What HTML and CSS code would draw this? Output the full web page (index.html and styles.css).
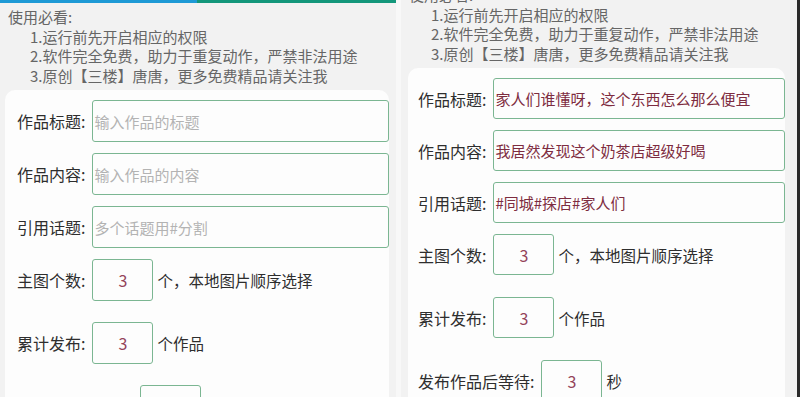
FILE: index.html
```html
<!DOCTYPE html>
<html lang="zh-CN">
<head>
    <meta charset="UTF-8">
    <meta name="viewport" content="width=device-width, initial-scale=1.0">
    <title>作品发布设置</title>
    <link rel="stylesheet" href="styles.css">
</head>
<body>
    <div class="screen">
        <div class="phone">
            <div class="progress">
                <span class="progress-blue"></span>
                <span class="progress-green"></span>
            </div>
            <div class="notice">
                <div class="notice-title">使用必看:</div>
                <div class="notice-item">1.运行前先开启相应的权限</div>
                <div class="notice-item">2.软件完全免费，助力于重复动作，严禁非法用途</div>
                <div class="notice-item">3.原创【三楼】唐唐，更多免费精品请关注我</div>
            </div>
            <div class="card">
                <div class="row">
                    <label class="row-label">作品标题:</label>
                    <input class="field field-wide" type="text" placeholder="输入作品的标题">
                </div>
                <div class="row">
                    <label class="row-label">作品内容:</label>
                    <input class="field field-wide" type="text" placeholder="输入作品的内容">
                </div>
                <div class="row">
                    <label class="row-label">引用话题:</label>
                    <input class="field field-wide" type="text" placeholder="多个话题用#分割">
                </div>
                <div class="row row-num">
                    <label class="row-label">主图个数:</label>
                    <input class="field field-num" type="text" value="3">
                    <span class="row-unit">个，本地图片顺序选择</span>
                </div>
                <div class="row row-num">
                    <label class="row-label">累计发布:</label>
                    <input class="field field-num" type="text" value="3">
                    <span class="row-unit">个作品</span>
                </div>
                <div class="row row-num">
                    <label class="row-label">发布作品后等待:</label>
                    <input class="field field-num" type="text" value="3">
                    <span class="row-unit">秒</span>
                </div>
            </div>
        </div>

        <div class="gap"></div>

        <div class="phone phone-scrolled">
            <div class="scroll">
                <div class="progress progress-hidden"></div>
                <div class="notice">
                    <div class="notice-title">使用必看:</div>
                    <div class="notice-item">1.运行前先开启相应的权限</div>
                    <div class="notice-item">2.软件完全免费，助力于重复动作，严禁非法用途</div>
                    <div class="notice-item">3.原创【三楼】唐唐，更多免费精品请关注我</div>
                </div>
                <div class="card">
                    <div class="row">
                        <label class="row-label">作品标题:</label>
                        <input class="field field-wide" type="text" value="家人们谁懂呀，这个东西怎么那么便宜">
                    </div>
                    <div class="row">
                        <label class="row-label">作品内容:</label>
                        <input class="field field-wide" type="text" value="我居然发现这个奶茶店超级好喝">
                    </div>
                    <div class="row">
                        <label class="row-label">引用话题:</label>
                        <input class="field field-wide" type="text" value="#同城#探店#家人们">
                    </div>
                    <div class="row row-num">
                        <label class="row-label">主图个数:</label>
                        <input class="field field-num" type="text" value="3">
                        <span class="row-unit">个，本地图片顺序选择</span>
                    </div>
                    <div class="row row-num">
                        <label class="row-label">累计发布:</label>
                        <input class="field field-num" type="text" value="3">
                        <span class="row-unit">个作品</span>
                    </div>
                    <div class="row row-num">
                        <label class="row-label">发布作品后等待:</label>
                        <input class="field field-num" type="text" value="3">
                        <span class="row-unit">秒</span>
                    </div>
                </div>
            </div>
        </div>

        <div class="edge"></div>
    </div>
</body>
</html>
```

FILE: styles.css
```css
html, body {
    margin: 0;
    padding: 0;
    height: 100%;
    overflow: hidden;
}
body {
    font-family: "Noto Sans CJK SC", "Noto Sans", sans-serif;
    background-color: #f3f3f3;
}
.screen {
    display: flex;
    height: 397px;
    overflow: hidden;
}
.phone {
    width: 396px;
    flex: none;
    background-color: #f2f2f2;
    overflow: hidden;
}
.gap {
    width: 5px;
    flex: none;
    background-color: #f8f8f8;
}
.edge {
    width: 3px;
    flex: none;
    background-color: #2a2a2a;
}
.progress {
    display: flex;
    height: 3px;
}
.progress-blue {
    width: 197px;
    background-color: #1e9ad6;
}
.progress-green {
    flex: 1;
    background-color: #13977b;
}
.notice {
    padding: 4px 8px 0;
    font-size: 15px;
    line-height: 19.5px;
    color: #666;
}
.notice-item {
    padding-left: 22px;
}
.card {
    margin: 5px 7px 0 5px;
    padding: 10px 0 20px 12px;
    background-color: #fdfdfd;
    border-radius: 10px;
}
.row {
    display: flex;
    align-items: center;
    gap: 7px;
    height: 42px;
    margin-bottom: 11px;
}
.row-num {
    margin-bottom: 21px;
}
.row-label {
    font-size: 16px;
    color: #2e2e2e;
    white-space: nowrap;
}
.row-unit {
    margin-left: -3px;
    font-size: 15.5px;
    color: #2e2e2e;
    white-space: nowrap;
}
.field {
    box-sizing: border-box;
    height: 100%;
    margin: 0;
    padding: 0 1px;
    border: 1.5px solid #7bb692;
    border-radius: 3px;
    background-color: #fdfdfd;
    font-family: "Noto Sans CJK SC", "Noto Sans", sans-serif;
    font-size: 15px;
    color: #7d2c40;
    outline: none;
}
.field::placeholder {
    color: #b3b3b3;
}
.field-wide {
    flex: 1;
    min-width: 0;
}
.field-num {
    width: 61px;
    flex: none;
    text-align: center;
    font-size: 16px;
    color: #93435a;
}

/* second screenshot is scrolled a little */
.phone-scrolled .scroll {
    margin-top: -22px;
}
.phone-scrolled .card {
    margin: 5px 12px 0 7px;
    padding-left: 10px;
}
.phone-scrolled .row {
    height: 41px;
}
.phone-scrolled .row-num {
    margin-bottom: 22px;
}
```
